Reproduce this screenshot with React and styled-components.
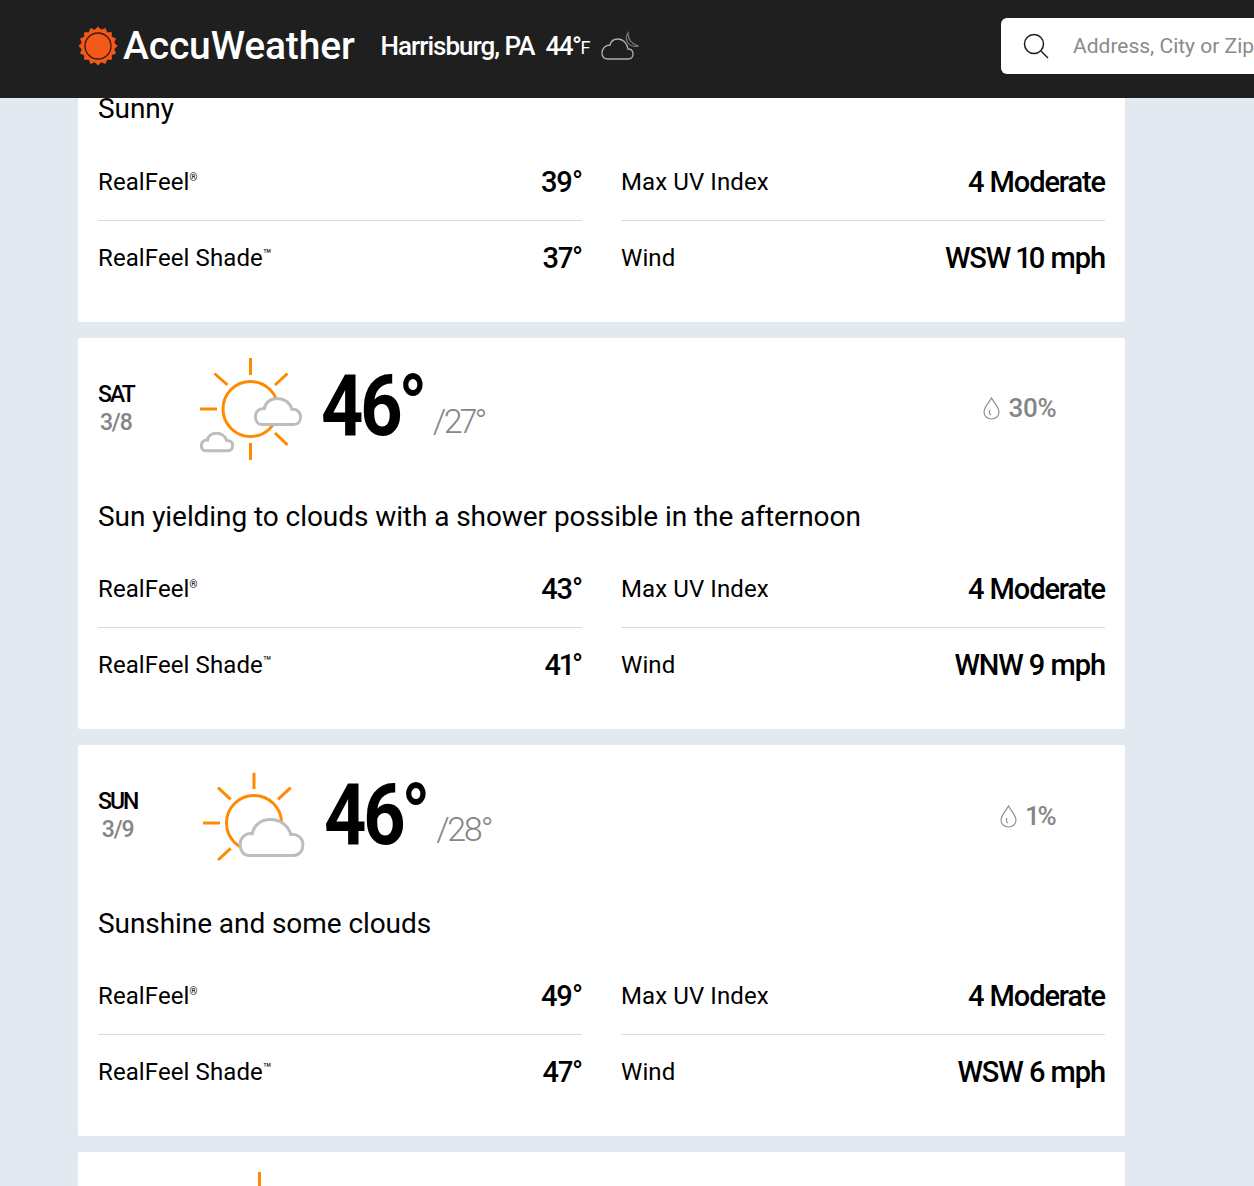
import React from 'react'
import styled, { createGlobalStyle } from 'styled-components'

const GlobalStyle = createGlobalStyle`
  html, body { margin: 0; padding: 0; height: 1186px; overflow: hidden; background: #e3e9f1; }
  body {
    font-family: Roboto, "Liberation Sans", sans-serif;
    font-variant-numeric: proportional-nums;
    color: #000;
  }
`

const Page = styled.div`
  height: 1186px;
  overflow: hidden;
  display: flex;
  flex-direction: column;
`

const Header = styled.header`
  flex: 0 0 98px;
  box-sizing: border-box;
  background: #1f1f1f;
  display: flex;
  align-items: center;
  padding: 0 0 6px 78px;
  overflow: hidden;
  position: relative;
  z-index: 1;
`

const Logo = styled.div`
  display: flex;
  align-items: center;
  gap: 5px;
  color: #fff;
  font-size: 39px;
  font-weight: 500;
  letter-spacing: -0.15px;
`

const Location = styled.div`
  margin-left: 26px;
  display: flex;
  align-items: center;
  color: #fff;
  font-size: 26px;
  font-weight: 500;
  letter-spacing: -1px;
`

const CurrentTemp = styled.span`
  margin-left: 11px;
  letter-spacing: -1.5px;
`

const Unit = styled.span`
  font-size: 18px;
  font-weight: 400;
  align-self: flex-end;
  margin-bottom: 3px;
`

const MoonIcon = styled.svg`
  margin-left: 12px;
`

const SearchBox = styled.div`
  margin-left: auto;
  flex: 0 0 253px;
  height: 56px;
  background: #fff;
  border-radius: 6px 0 0 6px;
  display: flex;
  align-items: center;
  padding-left: 22px;
  box-sizing: border-box;
  gap: 24px;
  white-space: nowrap;
  overflow: hidden;
  color: #8a8a8a;
  font-size: 21px;
`

const SearchGlyph = styled.svg`
  flex: none;
`

const List = styled.main`
  flex: 1;
  min-height: 0;
  overflow: hidden;
  padding: 0 129px 0 78px;
  display: flex;
  flex-direction: column;
  gap: 16px;
`

const Card = styled.section`
  flex: none;
  background: #fff;
  border-radius: 2px;
  padding: 0 20px 28px;
  margin-top: ${p => p.$top || 0}px;
`

const Head = styled.div`
  display: flex;
  align-items: flex-start;
  height: 164px;
  padding-left: ${p => p.$indent || 0}px;
`

const DateBlock = styled.div`
  display: flex;
  flex-direction: column;
  align-items: center;
  margin: 43px 66px 0 0;
  line-height: 28px;
  font-size: 23px;
  font-weight: 500;
`

const DayName = styled.span`
  letter-spacing: -2px;
`

const DayDate = styled.span`
  color: #858585;
  letter-spacing: -1.2px;
`

const IconBox = styled.svg`
  flex: none;
  width: 104px;
  height: 104px;
  margin: 19px 17px 0 0;
`

// the reference's numerals are much narrower than Roboto's
const Temp = styled.div`
  font-size: 86px;
  line-height: 84px;
  font-weight: 700;
  letter-spacing: -4.7px;
  transform: scaleX(0.86);
  transform-origin: left center;
  margin-top: ${p => 26 + (p.$drop || 0) * 2}px;
  margin-right: -17px;
`

const LowTemp = styled.div`
  font-size: 34px;
  line-height: 40px;
  color: #858585;
  font-weight: 300;
  letter-spacing: -2.5px;
  margin: ${p => 63 + (p.$drop || 0)}px 0 0 10px;
`

const Precip = styled.div`
  margin: ${p => 55 + (p.$drop || 0)}px 49px 0 auto;
  display: flex;
  align-items: center;
  gap: 9px;
  color: #858585;
  font-size: 26px;
  line-height: 30px;
  font-weight: 500;
  letter-spacing: -0.6px;
`

const Summary = styled.p`
  margin: 0 0 ${p => p.$gap || 20}px;
  font-size: 28px;
  line-height: 30px;
  letter-spacing: -0.07px;
`

const Stats = styled.div`
  display: grid;
  grid-template-columns: 484px 484px;
  column-gap: 39px;
`

const Stat = styled.div`
  height: ${p => (p.$last ? 73 : 76)}px;
  padding-bottom: ${p => (p.$last ? 0 : 1)}px;
  box-sizing: border-box;
  display: flex;
  align-items: center;
  justify-content: space-between;
  border-bottom: ${p => (p.$last ? 'none' : '1px solid #dcdcdc')};
`

const StatLabel = styled.span`
  font-size: 24px;
  letter-spacing: 0.1px;
`

const Mark = styled.sup`
  font-size: ${p => (p.$tm ? 14 : 10)}px;
  vertical-align: ${p => (p.$tm ? 7 : 9)}px;
  line-height: 0;
`

const StatValue = styled.span`
  font-size: 29px;
  font-weight: 500;
  letter-spacing: -1.1px;
`

const Cloud = ({ x, y, w, h }) => (
  <svg x={x} y={y} width={w} height={h} viewBox="0 0 100 60" preserveAspectRatio="none" overflow="visible">
    <path
      d="M14 59H84C94 59 99 51 99 42C99 31 91 24 80 25C76 10 63 1 48 1C33 1 22 11 20 24C10 22 1 30 1 41C1 51 6 59 14 59Z"
      fill="#fff"
      stroke="#bdbdbd"
      strokeWidth="3"
      vectorEffect="non-scaling-stroke"
    />
  </svg>
)

const Ray = ({ d }) => <path d={d} stroke="#ff8a00" strokeWidth="3" fill="none" />

// sun with a big cloud and a little one
const PartlyIcon = () => (
  <IconBox viewBox="0 0 104 104">
    <circle cx="50.5" cy="52" r="27.5" fill="none" stroke="#ff8a00" strokeWidth="3" />
    <Ray d="M50.5 1V18M50.5 86V103M0 52H17M14.5 16.5L27.5 28M87.5 16.5L75 28M87.5 88L75 76" />
    <Cloud x={55} y={41} w={46} h={27} />
    <Cloud x={1} y={76} w={32} h={18} />
  </IconBox>
)

const CloudySunIcon = () => (
  <IconBox viewBox="0 0 104 104">
    <circle cx="51" cy="59" r="27.5" fill="none" stroke="#ff8a00" strokeWidth="3" />
    <Ray d="M51 8.7V25M0 59H17M15 23.7L27.7 35.3M87.7 23.7L75 35.3M15 96L27.7 84.3" />
    <Cloud x={36.5} y={55} w={64} h={37} />
  </IconBox>
)

const SunIcon = () => (
  <IconBox viewBox="0 0 104 104">
    <Ray d="M50.5 1V18" />
  </IconBox>
)

const Drop = () => (
  <svg width="17" height="23" viewBox="0 0 17 23" fill="none" stroke="#8a8a8a" strokeWidth="1.1">
    <path d="M8.5 1C6 6 1 10 1 15C1 19 4.4 22 8.5 22C12.6 22 16 19 16 15C16 10 11 6 8.5 1Z" />
    <path d="M7 13C6 15 6.5 17 8 18" />
  </svg>
)

const SunLogo = () => {
  const spikes = Array.from({ length: 16 }, (_, i) => i * 22.5)
  return (
    <svg width="40" height="40" viewBox="0 0 40 40">
      {spikes.map(a => (
        <path key={a} d="M14.5 6L20 0.5L25.5 6Z" fill="#f2591a" transform={`rotate(${a} 20 20)`} />
      ))}
      <circle cx="20" cy="20" r="15.5" fill="#f2591a" />
      <circle cx="20" cy="20" r="13" fill="none" stroke="#3a1a0a" strokeWidth="1.3" />
    </svg>
  )
}

const Moon = () => (
  <MoonIcon width="38" height="30" viewBox="0 0 38 30" fill="none" stroke="#b0b0b0" strokeWidth="1.3">
    <path d="M27 2C23 8 27 17 37 15C31 13 27 9 27 2Z" stroke="#777" />
    <path
      d="M7 28H27C30 28 32 26 32 23C32 20 30 18 27 18C26 12 22 8 17 8C13 8 10 10 9 14C4 14 1 18 1 22C1 26 3.5 28 7 28Z"
      fill="#1f1f1f"
    />
  </MoonIcon>
)

const SearchIcon = () => (
  <SearchGlyph width="26" height="26" viewBox="0 0 26 26" fill="none" stroke="#1f1f1f" strokeWidth="1.5">
    <circle cx="11" cy="11" r="9.5" />
    <path d="M18 18L25 25" />
  </SearchGlyph>
)

const StatsBlock = ({ feel, shade, uv, wind }) => (
  <Stats>
    <Stat>
      <StatLabel>RealFeel<Mark>®</Mark></StatLabel>
      <StatValue>{feel}°</StatValue>
    </Stat>
    <Stat>
      <StatLabel>Max UV Index</StatLabel>
      <StatValue>{uv}</StatValue>
    </Stat>
    <Stat $last>
      <StatLabel>RealFeel Shade<Mark $tm>™</Mark></StatLabel>
      <StatValue>{shade}°</StatValue>
    </Stat>
    <Stat $last>
      <StatLabel>Wind</StatLabel>
      <StatValue>{wind}</StatValue>
    </Stat>
  </Stats>
)

const days = [
  {
    day: 'SAT', date: '3/8', Icon: PartlyIcon, high: 46, low: 27, rain: '30%', drop: 0,
    text: 'Sun yielding to clouds with a shower possible in the afternoon',
    feel: 43, shade: 41, uv: '4 Moderate', wind: 'WNW 9 mph',
  },
  {
    day: 'SUN', date: '3/9', Icon: CloudySunIcon, high: 46, low: 28, rain: '1%', drop: 1,
    text: 'Sunshine and some clouds',
    feel: 49, shade: 47, uv: '4 Moderate', wind: 'WSW 6 mph',
  },
]

export default function App() {
  return (
    <Page>
      <GlobalStyle />
      <Header>
        <Logo><SunLogo />AccuWeather</Logo>
        <Location>
          Harrisburg, PA
          <CurrentTemp>44°</CurrentTemp>
          <Unit>F</Unit>
          <Moon />
        </Location>
        <SearchBox><SearchIcon />Address, City or Zip</SearchBox>
      </Header>
      <List>
        {/* the list is scrolled: only the bottom of this card shows */}
        <Card $top={-4}>
          <Summary $gap={21}>Sunny</Summary>
          <StatsBlock feel={39} shade={37} uv="4 Moderate" wind="WSW 10 mph" />
        </Card>
        {days.map(d => (
          <Card key={d.day}>
            <Head>
              <DateBlock>
                <DayName>{d.day}</DayName>
                <DayDate>{d.date}</DayDate>
              </DateBlock>
              <d.Icon />
              <Temp $drop={d.drop}>{d.high}°</Temp>
              <LowTemp $drop={d.drop}>/{d.low}°</LowTemp>
              <Precip $drop={d.drop}><Drop />{d.rain}</Precip>
            </Head>
            <Summary>{d.text}</Summary>
            <StatsBlock feel={d.feel} shade={d.shade} uv={d.uv} wind={d.wind} />
          </Card>
        ))}
        <Card>
          <Head $indent={111}>
            <SunIcon />
          </Head>
        </Card>
      </List>
    </Page>
  )
}
